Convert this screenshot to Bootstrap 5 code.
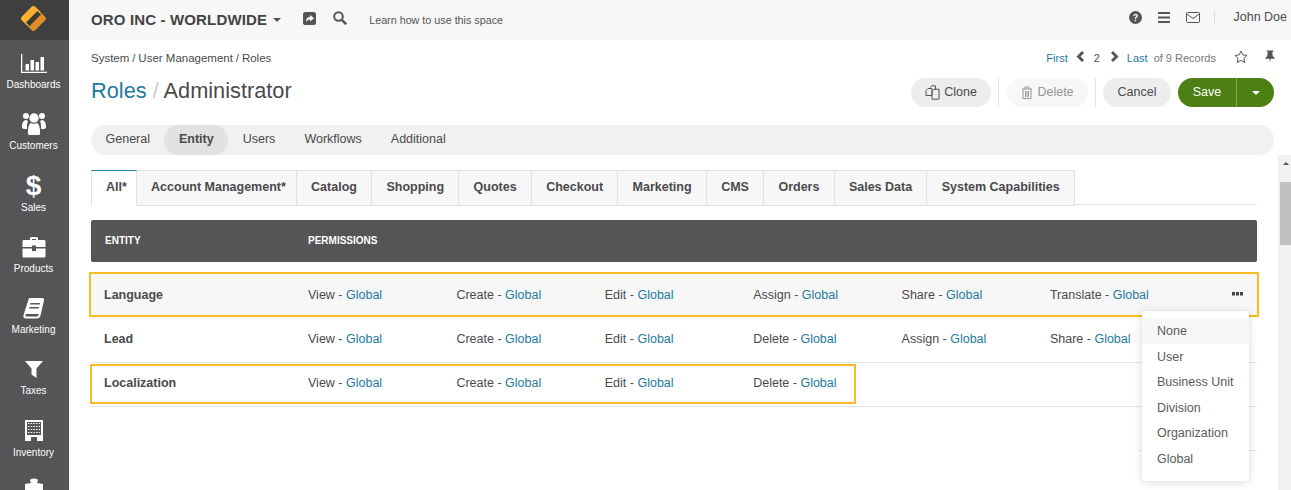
<!DOCTYPE html>
<html lang="en">
<head>
    <meta charset="utf-8">
    <title>Roles / Administrator</title>
    <meta name="viewport" content="width=device-width, initial-scale=1">
    <link href="https://cdn.jsdelivr.net/npm/bootstrap@5.3.2/dist/css/bootstrap.min.css" rel="stylesheet">
    <script src="https://cdn.jsdelivr.net/npm/bootstrap@5.3.2/dist/js/bootstrap.bundle.min.js"></script>
    <style>
        html, body { height: 100%; overflow: hidden; }
        body { font-family: "Liberation Sans", Arial, sans-serif; font-size: 12.5px; color: #4a4a4c; background: #fff; }
        a { color: #1f7a9e; text-decoration: none; }

        .side-rail { width: 69px; flex: none; background: #555456; color: #fff; height: 490px; overflow: hidden; }
        .side-logo { height: 40px; flex: none; background: #403f3f; padding: 0 2px 3px 0; }
        .side-item { height: 61.3px; flex: none; font-size: 10px; line-height: 12px; padding: 9px 2px 0 0; }
        .side-icon { height: 30px; padding-bottom: 2px; }
        .side-dollar { font-size: 28px; font-weight: 700; line-height: 28px; }

        .top-strip { height: 40px; background: #f7f7f7; padding: 0 4px 0 22px; }
        .org-name { font-size: 15px; font-weight: 700; color: #444; letter-spacing: .15px; }
        .org-caret { color: #555; margin-left: 6px; }
        .learn-link { font-size: 10.75px; color: #555; margin-left: 22px; }
        .top-sep { width: 1px; height: 13px; background: #ddd; margin-left: 14px; }
        .user-name { margin-left: 18px; }
        .caret-down { width: 0; height: 0; border: 4px solid transparent; border-top-color: currentColor; border-bottom: 0; display: inline-block; }
        .lift-ico { margin-bottom: 4px; }
        .share-ico { margin-left: 22px; }
        .search-ico { margin-left: 17px; }
        .top-right { padding-bottom: 5px; }
        .gap-16 { margin-left: 16px; }

        .main-col { min-width: 0; }
        .page-head { padding: 0 17px 0 22px; height: 85px; }
        .crumbs { font-size: 11.5px; padding-top: 10px; height: 38px; }
        .crumb-sep { margin: 0 2.9px; }
        .pager { font-size: 11px; margin-right: -1px; }
        .pager-muted { color: #777; margin-left: 6px; }
        .pg-prev { margin: 1px 0 0 8px; }
        .pg-num { margin: 0 11px 0 10px; }
        .pg-next { margin-top: 1px; }
        .pg-last { margin-left: 8px; }
        .pg-star { margin-left: 18px; }
        .pg-pin { margin-left: 17px; }
        .page-title { font-size: 21.75px; font-weight: 400; line-height: 26px; margin: 0; color: #4a4a4c; }
        .title-slash { color: #ccc; }
        .pill-btn { height: 29px; border-radius: 15px; background: #ededed; color: #4a4a4c; font-size: 12.5px; border: 0; padding: 0 14.5px; }
        .clone-btn { padding: 0 14px; }
        .pill-btn:disabled { background: #f3f3f3; color: #4a4a4c; opacity: .6; }
        .act-sep { width: 1px; height: 29px; background: #e3e3e3; margin: 0 8px 0 7px; }
        .act-sep-tight { margin: 0 7px; }
        .save-group { margin-left: 7px; }
        .save-btn { height: 29px; background: #4c8014; color: #fff; font-size: 12.5px; border: 0; padding: 0; width: 58px; border-radius: 15px 0 0 15px; }
        .save-drop { height: 29px; background: #4c8014; color: #fff; border: 0; border-left: 1px solid #86a85e; width: 38px; padding: 0; border-radius: 0 15px 15px 0; }

        .section-bar { margin: 0 17px 0 22px; height: 30px; background: #f1f1f1; border-radius: 15px; padding-left: 0; }
        .section-bar .nav-link { color: #4a4a4c; font-size: 12.5px; padding: 0 14.5px; line-height: 28px; height: 30px; border-radius: 15px; }
        .section-bar .nav-link.active { background: #e1e1e1; color: #4a4a4c; font-weight: 700; }

        .scroll-area { height: 335px; overflow: hidden; position: relative; padding: 15px 34px 0 22px; }
        .scroll-track { position: absolute; right: 0; top: 0; bottom: 0; width: 13px; background: #f1f1f1; }
        .scroll-thumb { position: absolute; left: 2px; right: 0; top: 27px; height: 63px; background: #c1c1c1; }
        .scroll-up { position: absolute; left: 5px; top: 7px; border: 3.5px solid transparent; border-bottom-color: #505050; border-top: 0; }

        .entity-tabs { border-bottom: 1px solid #e0e1e6; height: 35px; gap: 0; }
        .entity-tabs .nav-link { height: 36px; margin: 0; padding: 0 14.25px; line-height: 32px; font-weight: 700; font-size: 12.5px; color: #4a4a4c; background: #f7f7f8; border: 1px solid #e0e1e6; border-radius: 0; border-left: 0; }
        .entity-tabs .nav-link.active { background: #fff; border-top: 1px solid #1f8aa5; border-left: 1px solid #e0e1e6; border-bottom-color: #fff; padding-left: 14px; padding-right: 9px; }
        .entity-tabs .nav-link.star-tab { padding-right: 10px; }
        .entity-tabs .nav-link.active.star-tab { padding-right: 9px; }

        .perm-head { margin-top: 15px; height: 42px; background: #555456; color: #fff; font-size: 10px; font-weight: 700; border-radius: 2px; padding: 0 0 2px 14px; }
        .perm-row { height: 44px; border-bottom: 1px solid #e4e4e4; padding: 0 0 2px 13px; position: relative; }
        .head-name { width: 203px; flex: none; }
        .row-name { width: 204px; flex: none; font-weight: 700; }
        .perm-cell { width: 148.4px; flex: none; }
        .perm-row.first-row { background: #f7f7f7; margin: 10px 0 1px; border-bottom: 0; height: 46px; padding: 1px 0 0 13px; }
        .mark-box { position: absolute; border: 2px solid #f5bc23; pointer-events: none; }
        .mark-lang { left: -2px; right: -2px; top: 0; bottom: 1px; }
        .mark-local { left: -1px; top: 1px; height: 40px; width: 766px; }
        .row-dots { position: absolute; left: 1141px; top: 20px; }
        .stub-row { height: 44px; }
        .stub-line { width: 118px; border-bottom: 1px solid #e4e4e4; }

        .level-menu { display: block; left: 1073px; top: 156px; width: 107px; min-width: 0; padding: 7px 0 9px; border: 0; border-radius: 4px; background: #fff; box-shadow: 0 1px 8px rgba(0,0,0,.16); font-size: 12.5px; }
        .level-menu .dropdown-item { padding: 0 15px; height: 25.6px; line-height: 26px; color: #5a5a5c; }
        .level-menu .dropdown-item.active { background: #f7f7f7; color: #5a5a5c; }
    </style>
</head>
<body class="d-flex">
    <nav class="side-rail d-flex flex-column text-center">
        <div class="side-logo d-flex align-items-center justify-content-center">
            <svg width="29" height="29" viewBox="0 0 29 29"><g transform="rotate(-45 14.5 14.5)"><rect x="5" y="5" width="19" height="19" rx="2.5" fill="#dd8f2b"/><path d="M5 14.500V7.500A2.500 2.500 0 0 1 7.500 5h14a2.500 2.500 0 0 1 2.500 2.500v7z" fill="#f8b12f"/><rect x="6.500" y="12" width="16" height="5" fill="#3d3a36"/></g></svg>
        </div>
        <div class="side-item">
            <div class="side-icon d-flex align-items-center justify-content-center"><svg width="26" height="19" viewBox="0 0 26 19" fill="#fff"><path d="M0 0h1.300v17.700H26V19H0z"/><rect x="4.500" y="10" width="3.500" height="6.500"/><rect x="9.500" y="6" width="3.500" height="10.500"/><rect x="14.500" y="8" width="3.500" height="8.500"/><rect x="19.500" y="3" width="3.500" height="13.500"/></svg></div>
            Dashboards
        </div>
        <div class="side-item">
            <div class="side-icon d-flex align-items-center justify-content-center"><svg width="26" height="24" viewBox="0 0 26 24" fill="#fff"><circle cx="5" cy="4" r="3"/><circle cx="21" cy="4" r="3"/><circle cx="13" cy="6" r="4.700"/><path d="M1 15c0-5 2-7 4-7l2 1c-1 2-1 4-1 8H3c-1 0-2-1-2-2z"/><path d="M25 15c0-5-2-7-4-7l-2 1c1 2 1 4 1 8h3c1 0 2-1 2-2z"/><path d="M7 22c-.5-6 1-10 3-11l3 1 3-1c2 1 3.500 5 3 11-.1.700-1 1-2 1H9c-1 0-2-.300-2-1z"/></svg></div>
            Customers
        </div>
        <div class="side-item">
            <div class="side-icon side-dollar">$</div>
            Sales
        </div>
        <div class="side-item">
            <div class="side-icon d-flex align-items-center justify-content-center"><svg width="24" height="22" viewBox="0 0 24 22" fill="#fff"><path d="M8 4V2.500C8 1.700 8.700 1 9.500 1h5c.800 0 1.500.700 1.500 1.500V4h6c1 0 1.500.700 1.500 1.500V11H14V9.500h-4V11H.500V5.500C.500 4.700 1 4 2 4zm2-1v1h4V3z"/><path d="M.500 12.500H10V15h4v-2.500h9.500V20c0 1-.700 1.500-1.500 1.500H2C1.200 21.500.500 21 .500 20z"/></svg></div>
            Products
        </div>
        <div class="side-item">
            <div class="side-icon d-flex align-items-center justify-content-center"><svg width="22" height="21" viewBox="0 0 22 21" fill="#fff" fill-rule="evenodd"><path d="M6 0h13c1.500 0 2.500 1 2 2.500l-3.500 15c-.400 1.500-1.500 3-3.500 3H3c-2 0-3-1.500-2.500-3.500zm1.500 5-.400 1.500h9.500L17 5zm-1 4-.400 1.500h9.500l.400-1.500zM3.500 16c-.700 0-1 .500-1 1.200s.400 1.300 1.200 1.300H14c.800 0 1.200-.700 1.400-1.500l.200-1z"/></svg></div>
            Marketing
        </div>
        <div class="side-item">
            <div class="side-icon d-flex align-items-center justify-content-center"><svg width="18" height="17" viewBox="0 0 18 17" fill="#fff"><path d="M0 0h18l-6.500 7.500V17l-5-3.500V7.500z"/></svg></div>
            Taxes
        </div>
        <div class="side-item">
            <div class="side-icon d-flex align-items-center justify-content-center"><svg width="18" height="21" viewBox="0 0 18 21"><path d="M0 0h18v21h-6v-4H6v4H0z" fill="#fff"/><rect x="2" y="2" width="14" height="13" fill="#555456"/><g stroke="#fff" stroke-dasharray="1.500 1.200" fill="none"><path d="M3 3.500h12M3 6.500h12M3 9.500h12M3 12.500h12"/></g></svg></div>
            Inventory
        </div>
        <div class="side-item">
            <div class="side-icon d-flex align-items-start justify-content-center"><svg width="22" height="24" viewBox="0 0 22 24" fill="#fff"><path d="M8 5c0-1-1-1.500-1-2.500C7 1.200 8.500.500 11 .500s4 .700 4 2c0 1-1 1.500-1 2.500l6 1v16H2V6z"/></svg></div>
        </div>
    </nav>

    <div class="main-col flex-grow-1 d-flex flex-column">
        <header class="top-strip d-flex align-items-center">
            <span class="org-name">ORO INC - WORLDWIDE</span>
            <span class="caret-down org-caret"></span>
            <svg class="share-ico lift-ico" width="13" height="13" viewBox="0 0 13 13" fill="#555"><path d="M2 0h9c1 0 2 1 2 2v9c0 1-1 2-2 2H2c-1 0-2-1-2-2V2c0-1 1-2 2-2zm5 3v2C4 5 3 7 3 10c.800-1.600 2-2.500 4-2.500v2l4-3.200z"/></svg>
            <svg class="search-ico lift-ico" width="14" height="14" viewBox="0 0 14 14" fill="none" stroke="#555" stroke-width="2"><circle cx="5.500" cy="5.500" r="4.300"/><path d="M8.800 8.800l4.400 4.400" stroke-width="2.500"/></svg>
            <a class="learn-link" href="#">Learn how to use this space</a>
            <div class="top-right ms-auto d-flex align-items-center">
                <svg width="13" height="13" viewBox="0 0 13 13"><circle cx="6.500" cy="6.500" r="6.500" fill="#555"/><path d="M4.300 5c.100-1.500 1-2.200 2.300-2.200s2.300.800 2.300 2c0 1.700-1.800 1.600-1.800 3H5.700c0-2 1.700-2 1.700-3 0-.500-.300-.800-.800-.800S5.800 4.400 5.700 5z" fill="#f7f7f7"/><rect x="5.700" y="8.700" width="1.400" height="1.500" fill="#f7f7f7"/></svg>
                <svg class="gap-16" width="12" height="11" viewBox="0 0 12 11" fill="#555"><rect width="12" height="2"/><rect y="4.500" width="12" height="2"/><rect y="9" width="12" height="2"/></svg>
                <svg class="gap-16" width="14" height="11" viewBox="0 0 14 11" fill="none" stroke="#555"><rect x=".5" y=".5" width="13" height="10" rx="1"/><path d="M.8 2l6.200 4.500L13.200 2"/></svg>
                <span class="top-sep"></span>
                <span class="user-name">John Doe</span>
            </div>
        </header>

        <section class="page-head">
            <div class="crumbs d-flex justify-content-between">
                <span>System<span class="crumb-sep">/</span>User Management<span class="crumb-sep">/</span>Roles</span>
                <div class="pager d-flex align-items-start">
                    <a href="#">First</a>
                    <svg class="pg-prev" width="8" height="11" viewBox="0 0 8 11" fill="#555"><path d="M6 0l2 2-3.500 3.500L8 9l-2 2L.5 5.500z"/></svg>
                    <span class="pg-num">2</span>
                    <svg class="pg-next" width="8" height="11" viewBox="0 0 8 11" fill="#555"><path d="M2 0L0 2l3.500 3.500L0 9l2 2 5.500-5.500z"/></svg>
                    <a class="pg-last" href="#">Last</a>
                    <span class="pager-muted">of 9 Records</span>
                    <svg class="pg-star" width="14" height="13" viewBox="0 0 14 13" fill="none" stroke="#555"><path d="M7 1l1.800 3.900 4.200.5-3.100 2.900.8 4.200L7 10.400 3.300 12.500l.8-4.200L1 5.400l4.200-.5z"/></svg>
                    <svg class="pg-pin" width="10" height="13" viewBox="0 0 11 13" fill="#555"><path d="M2 0h7v1.500H8l.5 4.500 2 2v1H6.200l-.7 4-.7-4H.5V8l2-2L3 1.500H2z"/></svg>
                </div>
            </div>
            <div class="d-flex justify-content-between">
                <h1 class="page-title"><a href="#">Roles</a> <span class="title-slash">/</span> Administrator</h1>
                <div class="d-flex align-items-center">
                    <button class="pill-btn clone-btn d-flex align-items-center" type="button"><svg class="me-1" width="15" height="15" viewBox="0 0 15 15" fill="none" stroke="#555"><path d="M5 2.500L7 .800h3.500v4M1 5.500L3 3.500h4v7H1zM7 6l2-1.800h5v10H7z"/></svg>Clone</button>
                    <span class="act-sep"></span>
                    <button class="pill-btn d-flex align-items-center" type="button" disabled><svg class="me-1" width="12" height="13" viewBox="0 0 12 13" fill="none" stroke="#555"><path d="M1 3h10M4 3V1h4v2M2 3v9.500h8V3M4.500 5v6M6 5v6M7.500 5v6"/></svg>Delete</button>
                    <span class="act-sep act-sep-tight"></span>
                    <button class="pill-btn" type="button">Cancel</button>
                    <div class="d-flex save-group">
                        <button class="save-btn" type="button">Save</button>
                        <button class="save-drop d-flex align-items-center justify-content-center" type="button"><span class="caret-down"></span></button>
                    </div>
                </div>
            </div>
        </section>

        <ul class="nav section-bar">
            <li class="nav-item"><a class="nav-link" href="#">General</a></li>
            <li class="nav-item"><a class="nav-link active" href="#">Entity</a></li>
            <li class="nav-item"><a class="nav-link" href="#">Users</a></li>
            <li class="nav-item"><a class="nav-link" href="#">Workflows</a></li>
            <li class="nav-item"><a class="nav-link" href="#">Additional</a></li>
        </ul>

        <div class="scroll-area">
            <ul class="nav entity-tabs">
                <li class="nav-item"><a class="nav-link active star-tab" href="#">All*</a></li>
                <li class="nav-item"><a class="nav-link star-tab" href="#">Account Management*</a></li>
                <li class="nav-item"><a class="nav-link" href="#">Catalog</a></li>
                <li class="nav-item"><a class="nav-link" href="#">Shopping</a></li>
                <li class="nav-item"><a class="nav-link" href="#">Quotes</a></li>
                <li class="nav-item"><a class="nav-link" href="#">Checkout</a></li>
                <li class="nav-item"><a class="nav-link" href="#">Marketing</a></li>
                <li class="nav-item"><a class="nav-link" href="#">CMS</a></li>
                <li class="nav-item"><a class="nav-link" href="#">Orders</a></li>
                <li class="nav-item"><a class="nav-link" href="#">Sales Data</a></li>
                <li class="nav-item"><a class="nav-link" href="#">System Capabilities</a></li>
            </ul>

            <div class="perm-head d-flex align-items-center">
                <span class="head-name">ENTITY</span><span>PERMISSIONS</span>
            </div>

            <div class="perm-row first-row d-flex align-items-center">
                <span class="row-name">Language</span>
                <span class="perm-cell">View - <a href="#">Global</a></span>
                <span class="perm-cell">Create - <a href="#">Global</a></span>
                <span class="perm-cell">Edit - <a href="#">Global</a></span>
                <span class="perm-cell">Assign - <a href="#">Global</a></span>
                <span class="perm-cell">Share - <a href="#">Global</a></span>
                <span class="perm-cell">Translate - <a href="#">Global</a></span>
                <svg class="row-dots" width="11" height="4" viewBox="0 0 11 4" fill="#444"><rect width="3" height="3.500"/><rect x="4" width="3" height="3.500"/><rect x="8" width="3" height="3.500"/></svg>
                <span class="mark-box mark-lang"></span>
            </div>
            <div class="perm-row d-flex align-items-center">
                <span class="row-name">Lead</span>
                <span class="perm-cell">View - <a href="#">Global</a></span>
                <span class="perm-cell">Create - <a href="#">Global</a></span>
                <span class="perm-cell">Edit - <a href="#">Global</a></span>
                <span class="perm-cell">Delete - <a href="#">Global</a></span>
                <span class="perm-cell">Assign - <a href="#">Global</a></span>
                <span class="perm-cell">Share - <a href="#">Global</a></span>
            </div>
            <div class="perm-row d-flex align-items-center">
                <span class="row-name">Localization</span>
                <span class="perm-cell">View - <a href="#">Global</a></span>
                <span class="perm-cell">Create - <a href="#">Global</a></span>
                <span class="perm-cell">Edit - <a href="#">Global</a></span>
                <span class="perm-cell">Delete - <a href="#">Global</a></span>
                <span class="mark-box mark-local"></span>
            </div>
            <div class="stub-row d-flex justify-content-end"><div class="stub-line"></div></div>

            <ul class="dropdown-menu level-menu show list-unstyled m-0">
                <li><a class="dropdown-item active" href="#">None</a></li>
                <li><a class="dropdown-item" href="#">User</a></li>
                <li><a class="dropdown-item" href="#">Business Unit</a></li>
                <li><a class="dropdown-item" href="#">Division</a></li>
                <li><a class="dropdown-item" href="#">Organization</a></li>
                <li><a class="dropdown-item" href="#">Global</a></li>
            </ul>

            <div class="scroll-track"><span class="scroll-up"></span><div class="scroll-thumb"></div></div>
        </div>
    </div>
</body>
</html>
